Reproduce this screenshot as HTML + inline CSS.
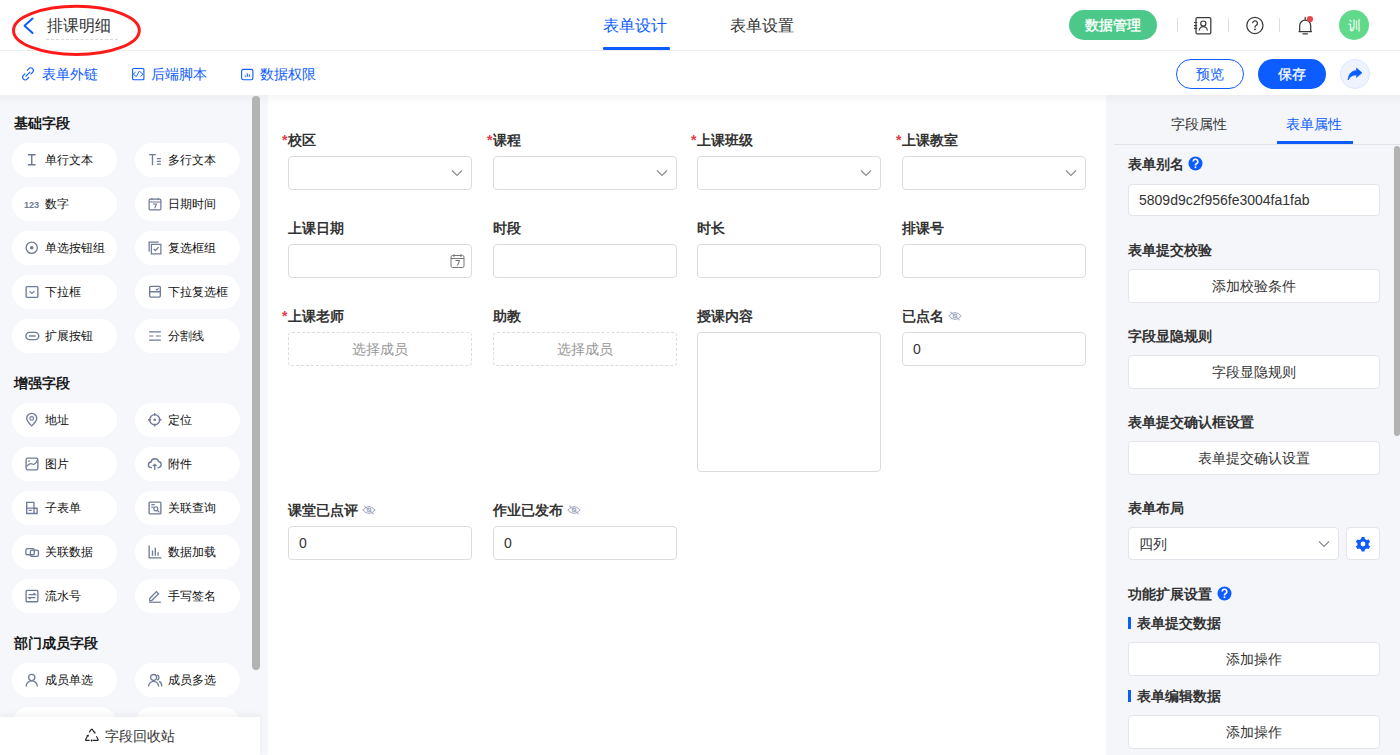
<!DOCTYPE html>
<html><head><meta charset="utf-8">
<style>
*{box-sizing:border-box;margin:0;padding:0}
html,body{width:1400px;height:755px;overflow:hidden;background:#fff;font-family:"Liberation Sans",sans-serif;color:#333}
.a{position:absolute}
.hdr{left:0;top:0;width:1400px;height:51px;background:#fff;border-bottom:1px solid #eceef2}
.tb{left:0;top:51px;width:1400px;height:44px;background:#fff}
.lp{left:0;top:95px;width:268px;height:660px;background:#f5f7fb}
.cv{left:268px;top:95px;width:838px;height:660px;background:#fff}
.rp{left:1106px;top:95px;width:294px;height:660px;background:#f5f6fa}
.sec{font-size:14px;font-weight:bold;color:#1a1a1a;left:14px;line-height:16px}
.pill{width:105px;height:34px;border-radius:17px;background:#fff;font-size:12px;color:#111;line-height:34px;padding-left:33px}
.pill svg{position:absolute;left:13px;top:10px;overflow:visible}
.lbl{font-size:14px;font-weight:bold;color:#333;line-height:16px}
.star{color:#e34d59;font-weight:normal;position:absolute;left:-6px;top:1px;font-size:13px}
.inp{width:184px;height:34px;border:1px solid #dcdcdc;border-radius:4px;background:#fff}
.dash{width:184px;height:34px;border:1px dashed #d9dce3;border-radius:4px;background:#fff;font-size:14px;color:#999;text-align:center;line-height:32px}
.val{font-size:14px;color:#333;line-height:32px;padding-left:10px}
.rl{font-size:14px;font-weight:bold;color:#333;left:1128px;line-height:16px}
.rb{left:1128px;width:252px;height:34px;border:1px solid #e3e5ea;border-radius:4px;background:#fff;font-size:14px;color:#333;text-align:center;line-height:32px}
</style></head><body>

<!-- header -->
<div class="a hdr"></div>
<svg class="a" style="left:0;top:0" width="160" height="60">
  <path d="M32.5 18.5 L24.5 25.7 L32.5 33" fill="none" stroke="#0d5cff" stroke-width="2" stroke-linecap="round" stroke-linejoin="round"/>
</svg>
<div class="a" style="left:47px;top:16px;font-size:16px;line-height:20px;color:#333">排课明细</div>
<div class="a" style="left:46px;top:39px;width:72px;border-top:1px dashed #d6d8de"></div>
<svg class="a" style="left:0;top:0" width="160" height="60">
  <ellipse cx="76.4" cy="30.4" rx="62.9" ry="24.1" fill="none" stroke="#ff1a1a" stroke-width="3"/>
</svg>

<div class="a" style="left:603px;top:16px;font-size:16px;line-height:20px;color:#0d5cff">表单设计</div>
<div class="a" style="left:603px;top:47px;width:67px;height:3px;background:#0d5cff;border-radius:1px"></div>
<div class="a" style="left:730px;top:16px;font-size:16px;line-height:20px;color:#333">表单设置</div>

<div class="a" style="left:1069px;top:10px;width:88px;height:30px;border-radius:15px;background:#4cc98a;color:#fff;font-size:14px;line-height:30px;text-align:center;font-weight:500;-webkit-text-stroke:0.35px #fff">数据管理</div>
<div class="a" style="left:1177px;top:18px;width:1px;height:14px;background:#dedede"></div>
<div class="a" style="left:1228px;top:18px;width:1px;height:14px;background:#dedede"></div>
<div class="a" style="left:1279px;top:18px;width:1px;height:14px;background:#dedede"></div>
<div class="a" style="left:1339px;top:10px;width:30px;height:30px;border-radius:15px;background:#60d98a;color:#fff;font-size:13px;line-height:32px;text-align:center">训</div>


<svg class="a" style="left:1190px;top:14px" width="24" height="24" viewBox="0 0 24 24"><rect x="6" y="3.5" width="14.8" height="16.3" rx="1.3" stroke="#3a3a3a" stroke-width="1.25" fill="none"/><path d="M4 8.5h3.2M4 11.6h3.2M4 14.4h3.2" stroke="#3a3a3a" stroke-width="1.2"/><circle cx="13.3" cy="9.6" r="2.6" stroke="#3a3a3a" stroke-width="1.2" fill="none"/><path d="M9.3 16.6a4 4 0 0 1 8 0" stroke="#3a3a3a" stroke-width="1.2" fill="none"/></svg>
<svg class="a" style="left:1243px;top:14px" width="24" height="24" viewBox="0 0 24 24"><circle cx="11.9" cy="11.4" r="8.1" stroke="#3a3a3a" stroke-width="1.25" fill="none"/><path d="M9.6 9.3a2.4 2.4 0 1 1 3.4 2.2c-.7.35-1 .7-1 1.5v.7" stroke="#3a3a3a" stroke-width="1.25" fill="none"/><circle cx="12" cy="15.4" r="0.9" fill="#3a3a3a"/></svg>
<svg class="a" style="left:1293px;top:14px" width="24" height="24" viewBox="0 0 24 24"><path d="M5.5 17.5h13.5M6.7 17.2v-5.5a5.5 5.5 0 0 1 11 0v5.5" stroke="#3a3a3a" stroke-width="1.25" fill="none" stroke-linejoin="round"/><path d="M12.2 3.4v2.3M10 19.8h4.4" stroke="#3a3a3a" stroke-width="1.25" stroke-linecap="round"/><circle cx="17" cy="5.1" r="3.1" fill="#e5484d"/></svg>
<svg class="a" style="left:20px;top:66px" width="16" height="16" viewBox="0 0 16 16"><path d="M7.3 4.3l1.6-1.6a2.6 2.6 0 0 1 3.7 3.7L11 8M5 7.8L3.4 9.4a2.6 2.6 0 0 0 3.7 3.7l1.6-1.6M5.9 10.1l4-4" stroke="#0d5cff" stroke-width="1.1" fill="none" stroke-linecap="round"/></svg>
<svg class="a" style="left:130px;top:66px" width="16" height="16" viewBox="0 0 16 16"><rect x="2.6" y="2.5" width="11.3" height="11.2" rx="1" stroke="#0d5cff" stroke-width="1.1" fill="none"/><path d="M5.6 6L3.2 8.1L6.3 10.6L9.3 5.1L13 8.2L10.4 10.5" stroke="#0d5cff" stroke-width="0.9" fill="none" stroke-linejoin="round"/></svg>
<svg class="a" style="left:239px;top:66px" width="16" height="16" viewBox="0 0 16 16"><rect x="2.6" y="3.4" width="11.3" height="10.3" rx="1.8" stroke="#0d5cff" stroke-width="1.1" fill="none"/><path d="M6.3 10.8V9.3M8.3 10.8V7.3M10.3 10.8V8.3" stroke="#0d5cff" stroke-width="1" fill="none"/></svg>


<!-- toolbar -->
<div class="a" style="left:42px;top:66px;font-size:14px;line-height:16px;color:#0d5cff">表单外链</div>
<div class="a" style="left:151px;top:66px;font-size:14px;line-height:16px;color:#0d5cff">后端脚本</div>
<div class="a" style="left:260px;top:66px;font-size:14px;line-height:16px;color:#0d5cff">数据权限</div>

<div class="a" style="left:1176px;top:59px;width:68px;height:30px;border:1px solid #0d5cff;border-radius:15px;color:#0d5cff;font-size:14px;line-height:28px;text-align:center">预览</div>
<div class="a" style="left:1258px;top:59px;width:68px;height:30px;border-radius:15px;background:#0d5cff;color:#fff;font-size:14px;line-height:30px;text-align:center;font-weight:500;-webkit-text-stroke:0.3px #fff">保存</div>
<div class="a" style="left:1340px;top:59px;width:30px;height:30px;border-radius:15px;background:#eef3ff;border:1px solid #dbe6ff"></div>

<svg class="a" style="left:1340px;top:59px" width="30" height="30" viewBox="0 0 30 30"><path d="M8 21C8.5 15 12 11.5 16.5 11.5V9L22 13.8L16.5 18.5V16C12.5 16 10 17.5 8 21z" fill="#0d5cff" stroke="#0d5cff" stroke-width="0.6" stroke-linejoin="round"/></svg>
<!-- panels -->
<div class="a lp"></div>
<div class="a cv"></div>
<div class="a rp"></div>
<div class="a" style="left:0;top:95px;width:1400px;height:10px;background:linear-gradient(rgba(0,0,0,0.035),rgba(0,0,0,0))"></div>
<div class="a sec" style="top:115px">基础字段</div>
<div class="a sec" style="top:375px">增强字段</div>
<div class="a sec" style="top:635px">部门成员字段</div>
<div class="a pill" style="left:12px;top:143px"><svg width="14" height="14" viewBox="0 0 12.5 12.5" style="left:13px;top:10px"><path d="M2.5 1.5h7M2.5 10.5h7M6 1.5v9" stroke="#6e7a96" stroke-width="1.3" fill="none"/></svg>单行文本</div>
<div class="a pill" style="left:135px;top:143px"><svg width="14" height="14" viewBox="0 0 12.5 12.5" style="left:13px;top:10px"><path d="M1 1.5h6M4 1.5v9.5M8 5h3.5M8 7.5h3.5M8 10h3.5" stroke="#6e7a96" stroke-width="1.2" fill="none"/></svg>多行文本</div>
<div class="a pill" style="left:12px;top:187px"><svg width="14" height="14" viewBox="0 0 12.5 12.5" style="left:13px;top:10px"><text x="-1" y="9.6" font-family="Liberation Sans" font-weight="bold" font-size="8.2" fill="#6e7a96">123</text></svg>数字</div>
<div class="a pill" style="left:135px;top:187px"><svg width="14" height="14" viewBox="0 0 12.5 12.5" style="left:13px;top:10px"><rect x="1" y="2" width="10.5" height="9.5" rx="1" stroke="#6e7a96" stroke-width="1.1" fill="none"/><path d="M1 4.5h10.5M3.5 0.8v2.2M9 0.8v2.2M4.5 6.2h3l-1.5 4" stroke="#6e7a96" stroke-width="1" fill="none"/></svg>日期时间</div>
<div class="a pill" style="left:12px;top:231px"><svg width="14" height="14" viewBox="0 0 12.5 12.5" style="left:13px;top:10px"><circle cx="6" cy="6" r="5" stroke="#6e7a96" stroke-width="1.2" fill="none"/><circle cx="6" cy="6" r="1.6" fill="#6e7a96"/></svg>单选按钮组</div>
<div class="a pill" style="left:135px;top:231px"><svg width="14" height="14" viewBox="0 0 12.5 12.5" style="left:13px;top:10px"><path d="M1 9.5V1h8.5" stroke="#6e7a96" stroke-width="1.1" fill="none"/><rect x="3" y="3" width="8.5" height="8.5" stroke="#6e7a96" stroke-width="1.1" fill="none"/><path d="M5 7l1.5 1.5 3-3" stroke="#6e7a96" stroke-width="1.1" fill="none"/></svg>复选框组</div>
<div class="a pill" style="left:12px;top:275px"><svg width="14" height="14" viewBox="0 0 12.5 12.5" style="left:13px;top:10px"><rect x="1" y="1.5" width="10.5" height="9.5" rx="0.8" stroke="#6e7a96" stroke-width="1.2" fill="none"/><path d="M4 5.5l2.2 2 2.2-2" stroke="#6e7a96" stroke-width="1.1" fill="none"/></svg>下拉框</div>
<div class="a pill" style="left:135px;top:275px"><svg width="14" height="14" viewBox="0 0 12.5 12.5" style="left:13px;top:10px"><path d="M1.5 6V2.2Q1.5 1.2 2.5 1.2h7.5q1 0 1 1V6ZM1.5 6v3.8q0 1 1 1h7.5q1 0 1-1V6" stroke="#6e7a96" stroke-width="1.2" fill="none"/><path d="M7 3.5l1 1 1.5-1.5" stroke="#6e7a96" stroke-width="1" fill="none"/></svg>下拉复选框</div>
<div class="a pill" style="left:12px;top:319px"><svg width="14" height="14" viewBox="0 0 12.5 12.5" style="left:13px;top:10px"><rect x="0.8" y="3" width="11.5" height="6.5" rx="3.25" stroke="#6e7a96" stroke-width="1.3" fill="none"/><path d="M3.5 6.25h6" stroke="#6e7a96" stroke-width="1.3"/></svg>扩展按钮</div>
<div class="a pill" style="left:135px;top:319px"><svg width="14" height="14" viewBox="0 0 12.5 12.5" style="left:13px;top:10px"><path d="M1 2.5h10.5M1 10h10.5" stroke="#6e7a96" stroke-width="1.1"/><path d="M1 6.25h4M7 6.25h4.5" stroke="#6e7a96" stroke-width="1.1"/></svg>分割线</div>
<div class="a pill" style="left:12px;top:403px"><svg width="14" height="14" viewBox="0 0 12.5 12.5" style="left:13px;top:10px"><path d="M6 11.5C3 8.5 1.5 6.5 1.5 4.8a4.5 4.5 0 0 1 9 0c0 1.7-1.5 3.7-4.5 6.7z" stroke="#6e7a96" stroke-width="1.2" fill="none"/><circle cx="6" cy="4.8" r="1.6" stroke="#6e7a96" stroke-width="1.1" fill="none"/></svg>地址</div>
<div class="a pill" style="left:135px;top:403px"><svg width="14" height="14" viewBox="0 0 12.5 12.5" style="left:13px;top:10px"><circle cx="6" cy="6" r="4.5" stroke="#6e7a96" stroke-width="1.2" fill="none"/><circle cx="6" cy="6" r="1.2" fill="#6e7a96"/><path d="M6 0v2.5M6 9.5V12M0 6h2.5M9.5 6H12" stroke="#6e7a96" stroke-width="1.2"/></svg>定位</div>
<div class="a pill" style="left:12px;top:447px"><svg width="14" height="14" viewBox="0 0 12.5 12.5" style="left:13px;top:10px"><rect x="1" y="1" width="10.5" height="10.5" rx="1.5" stroke="#6e7a96" stroke-width="1.2" fill="none"/><path d="M1.5 8.5Q4 4.8 6.5 6.2T11 3" stroke="#6e7a96" stroke-width="1.1" fill="none"/><circle cx="3.6" cy="3.6" r="0.8" fill="#6e7a96"/></svg>图片</div>
<div class="a pill" style="left:135px;top:447px"><svg width="14" height="14" viewBox="0 0 12.5 12.5" style="left:13px;top:10px"><path d="M3.5 9.5H3a2.5 2.5 0 0 1-.3-5A3.5 3.5 0 0 1 9.5 4a2.8 2.8 0 0 1 0 5.5H8.5" stroke="#6e7a96" stroke-width="1.2" fill="none"/><path d="M6 11.5V6.5M4.3 8.2L6 6.5l1.7 1.7" stroke="#6e7a96" stroke-width="1.1" fill="none"/></svg>附件</div>
<div class="a pill" style="left:12px;top:491px"><svg width="14" height="14" viewBox="0 0 12.5 12.5" style="left:13px;top:10px"><path d="M1.5 11.2V1.2h6.5V11.2zM1.5 6.3h6.5M3.3 8.4h2.8M8 6.5h2.8v4.7H8" stroke="#6e7a96" stroke-width="1.2" fill="none"/></svg>子表单</div>
<div class="a pill" style="left:135px;top:491px"><svg width="14" height="14" viewBox="0 0 12.5 12.5" style="left:13px;top:10px"><rect x="1" y="1" width="10.5" height="10.5" rx="0.8" stroke="#6e7a96" stroke-width="1.2" fill="none"/><path d="M3 3.2h3M3 5.5h2" stroke="#6e7a96" stroke-width="1"/><circle cx="7" cy="7" r="1.8" stroke="#6e7a96" stroke-width="1" fill="none"/><path d="M8.3 8.3l1.8 1.8" stroke="#6e7a96" stroke-width="1.1"/></svg>关联查询</div>
<div class="a pill" style="left:12px;top:535px"><svg width="14" height="14" viewBox="0 0 12.5 12.5" style="left:13px;top:10px"><rect x="0.8" y="3.2" width="7.5" height="5.5" rx="1.4" stroke="#6e7a96" stroke-width="1.2" fill="none"/><rect x="4.8" y="4.6" width="7.2" height="5.5" rx="1.4" stroke="#6e7a96" stroke-width="1.2" fill="none"/></svg>关联数据</div>
<div class="a pill" style="left:135px;top:535px"><svg width="14" height="14" viewBox="0 0 12.5 12.5" style="left:13px;top:10px"><path d="M1 0.5v11h11M4 9.5V5M6.5 9.5V2.5M9 9.5V6.5" stroke="#6e7a96" stroke-width="1.2" fill="none"/></svg>数据加载</div>
<div class="a pill" style="left:12px;top:579px"><svg width="14" height="14" viewBox="0 0 12.5 12.5" style="left:13px;top:10px"><rect x="1" y="1.2" width="10.5" height="10.2" rx="1" stroke="#6e7a96" stroke-width="1.2" fill="none"/><path d="M3.2 5h6l-1.6-1.4M9.3 7.6h-6l1.6 1.4" stroke="#6e7a96" stroke-width="1.1" fill="none"/></svg>流水号</div>
<div class="a pill" style="left:135px;top:579px"><svg width="14" height="14" viewBox="0 0 12.5 12.5" style="left:13px;top:10px"><path d="M1.5 8.5l6-6.2 2 2-6.2 6H1.5z" stroke="#6e7a96" stroke-width="1.1" fill="none"/><path d="M1 11.8h10.5" stroke="#6e7a96" stroke-width="1.1"/></svg>手写签名</div>
<div class="a pill" style="left:12px;top:663px"><svg width="14" height="14" viewBox="0 0 12.5 12.5" style="left:13px;top:10px"><circle cx="6" cy="4" r="2.8" stroke="#6e7a96" stroke-width="1.2" fill="none"/><path d="M1 12a5 5 0 0 1 10 0" stroke="#6e7a96" stroke-width="1.2" fill="none"/></svg>成员单选</div>
<div class="a pill" style="left:135px;top:663px"><svg width="14" height="14" viewBox="0 0 12.5 12.5" style="left:13px;top:10px"><circle cx="5" cy="4" r="2.7" stroke="#6e7a96" stroke-width="1.2" fill="none"/><path d="M0.5 12a4.5 4.5 0 0 1 9 0M8.2 1.6a2.6 2.6 0 0 1 0 4.8M10 7.5a4.5 4.5 0 0 1 2.2 4.5" stroke="#6e7a96" stroke-width="1.2" fill="none"/></svg>成员多选</div>
<div class="a pill" style="left:12px;top:707px"></div>
<div class="a pill" style="left:135px;top:707px"></div>

<div class="a" style="left:252px;top:96px;width:8px;height:574px;border-radius:4px;background:#b3b3b3"></div>
<div class="a" style="left:0;top:717px;width:260px;height:38px;background:#fff;box-shadow:0 -2px 6px rgba(0,0,0,0.06)"></div>
<svg class="a" style="left:78px;top:722px" width="30" height="28" viewBox="0 0 30 28"><path d="M11.2 10.4L13.3 7.4Q13.8 6.8 14.3 7.4L16.3 10.4M9.8 13.6L7.6 17.6Q7.2 18.4 8.1 18.4H11.6M14.5 18.4H19.6Q20.5 18.4 20.1 17.6L18.4 14.3" stroke="#222" stroke-width="1.1" fill="none"/><path d="M15.6 11.6L17.8 11.2L16.9 9.1z M8.2 13.6L10.6 12.4L10.9 14.8z M14.1 16.9L12.4 18.4L14.1 19.9z" fill="#222"/></svg>
<div class="a" style="left:105px;top:728px;font-size:14px;line-height:16px;color:#333">字段回收站</div>
<div class="a" style="left:282px;top:133px;font-size:14px;line-height:14px;font-weight:bold;color:#e6394a">*</div><div class="a lbl" style="left:288px;top:132px">校区</div>
<div class="a inp" style="left:288px;top:156px"></div>
<svg class="a" style="left:451px;top:169px" width="12" height="8" viewBox="0 0 12 8"><path d="M1 1.5l5 5 5-5" stroke="#8c8c8c" stroke-width="1.2" fill="none"/></svg>
<div class="a" style="left:487px;top:133px;font-size:14px;line-height:14px;font-weight:bold;color:#e6394a">*</div><div class="a lbl" style="left:493px;top:132px">课程</div>
<div class="a inp" style="left:493px;top:156px"></div>
<svg class="a" style="left:656px;top:169px" width="12" height="8" viewBox="0 0 12 8"><path d="M1 1.5l5 5 5-5" stroke="#8c8c8c" stroke-width="1.2" fill="none"/></svg>
<div class="a" style="left:691px;top:133px;font-size:14px;line-height:14px;font-weight:bold;color:#e6394a">*</div><div class="a lbl" style="left:697px;top:132px">上课班级</div>
<div class="a inp" style="left:697px;top:156px"></div>
<svg class="a" style="left:860px;top:169px" width="12" height="8" viewBox="0 0 12 8"><path d="M1 1.5l5 5 5-5" stroke="#8c8c8c" stroke-width="1.2" fill="none"/></svg>
<div class="a" style="left:896px;top:133px;font-size:14px;line-height:14px;font-weight:bold;color:#e6394a">*</div><div class="a lbl" style="left:902px;top:132px">上课教室</div>
<div class="a inp" style="left:902px;top:156px"></div>
<svg class="a" style="left:1065px;top:169px" width="12" height="8" viewBox="0 0 12 8"><path d="M1 1.5l5 5 5-5" stroke="#8c8c8c" stroke-width="1.2" fill="none"/></svg>
<div class="a lbl" style="left:288px;top:220px">上课日期</div>
<div class="a inp" style="left:288px;top:244px"></div>
<div class="a lbl" style="left:493px;top:220px">时段</div>
<div class="a inp" style="left:493px;top:244px"></div>
<div class="a lbl" style="left:697px;top:220px">时长</div>
<div class="a inp" style="left:697px;top:244px"></div>
<div class="a lbl" style="left:902px;top:220px">排课号</div>
<div class="a inp" style="left:902px;top:244px"></div>
<svg class="a" style="left:450px;top:253px" width="15" height="16" viewBox="0 0 15 16"><rect x="1" y="2.5" width="13" height="12" rx="1.5" stroke="#777" stroke-width="1" fill="none"/><path d="M1 5.5h13M4 1v3M11 1v3" stroke="#777" stroke-width="1" fill="none"/><path d="M5.5 7.5h4l-2 5" stroke="#666" stroke-width="1" fill="none"/></svg>
<div class="a" style="left:282px;top:309px;font-size:14px;line-height:14px;font-weight:bold;color:#e6394a">*</div><div class="a lbl" style="left:288px;top:308px">上课老师</div>
<div class="a dash" style="left:288px;top:332px">选择成员</div>
<div class="a lbl" style="left:493px;top:308px">助教</div>
<div class="a dash" style="left:493px;top:332px">选择成员</div>
<div class="a lbl" style="left:697px;top:308px">授课内容</div>
<div class="a inp" style="left:697px;top:332px;height:140px"></div>
<div class="a lbl" style="left:902px;top:308px">已点名</div><svg class="a" style="left:948px;top:310px" width="14" height="12" viewBox="0 0 15 12"><path d="M1 6q6.5-7.5 13 0q-6.5 7.5-13 0z" stroke="#a3adc2" stroke-width="1.1" fill="none"/><circle cx="7.5" cy="6" r="2" stroke="#a3adc2" stroke-width="1.1" fill="none"/><path d="M2.5 1.5l10 9" stroke="#a3adc2" stroke-width="1.1"/></svg>
<div class="a inp val" style="left:902px;top:332px">0</div>
<div class="a lbl" style="left:288px;top:502px">课堂已点评</div><svg class="a" style="left:362px;top:504px" width="14" height="12" viewBox="0 0 15 12"><path d="M1 6q6.5-7.5 13 0q-6.5 7.5-13 0z" stroke="#a3adc2" stroke-width="1.1" fill="none"/><circle cx="7.5" cy="6" r="2" stroke="#a3adc2" stroke-width="1.1" fill="none"/><path d="M2.5 1.5l10 9" stroke="#a3adc2" stroke-width="1.1"/></svg>
<div class="a inp val" style="left:288px;top:526px">0</div>
<div class="a lbl" style="left:493px;top:502px">作业已发布</div><svg class="a" style="left:567px;top:504px" width="14" height="12" viewBox="0 0 15 12"><path d="M1 6q6.5-7.5 13 0q-6.5 7.5-13 0z" stroke="#a3adc2" stroke-width="1.1" fill="none"/><circle cx="7.5" cy="6" r="2" stroke="#a3adc2" stroke-width="1.1" fill="none"/><path d="M2.5 1.5l10 9" stroke="#a3adc2" stroke-width="1.1"/></svg>
<div class="a inp val" style="left:493px;top:526px">0</div>

<div class="a" style="left:1171px;top:116px;font-size:14px;line-height:16px;color:#333">字段属性</div>
<div class="a" style="left:1286px;top:116px;font-size:14px;line-height:16px;color:#0d5cff">表单属性</div>
<div class="a" style="left:1114px;top:144px;width:286px;height:1px;background:#dfe2e8"></div>
<div class="a" style="left:1277px;top:141px;width:76px;height:3px;background:#0d5cff"></div>
<div class="a" style="left:1394px;top:146px;width:6px;height:290px;border-radius:3px;background:#b3b3b3"></div>
<div class="a rl" style="top:156px">表单别名</div>
<svg class="a" style="left:1188px;top:156px" width="15" height="15" viewBox="0 0 15 15"><circle cx="7.5" cy="7.5" r="7" fill="#0d5cff"/><path d="M5.2 5.6a2.3 2.3 0 1 1 3.2 2.1c-.6.3-.9.6-.9 1.3v.4" stroke="#fff" stroke-width="1.6" fill="none"/><circle cx="7.5" cy="11.3" r="0.95" fill="#fff"/></svg>
<div class="a rb" style="top:184px;height:32px;text-align:left;padding-left:10px;line-height:30px">5809d9c2f956fe3004fa1fab</div>
<div class="a rl" style="top:242px">表单提交校验</div>
<div class="a rb" style="top:269px">添加校验条件</div>
<div class="a rl" style="top:328px">字段显隐规则</div>
<div class="a rb" style="top:355px">字段显隐规则</div>
<div class="a rl" style="top:414px">表单提交确认框设置</div>
<div class="a rb" style="top:441px">表单提交确认设置</div>
<div class="a rl" style="top:500px">表单布局</div>
<div class="a rb" style="top:527px;width:211px;height:33px;text-align:left;padding-left:10px">四列</div>
<svg class="a" style="left:1318px;top:540px" width="12" height="8" viewBox="0 0 12 8"><path d="M1 1.5l5 5 5-5" stroke="#8c8c8c" stroke-width="1.2" fill="none"/></svg>
<div class="a rb" style="top:527px;left:1346px;width:34px;height:33px"></div>
<svg class="a" style="left:1355px;top:536px" width="16" height="16" viewBox="0 0 16 16"><path fill="#0d5cff" fill-rule="evenodd" d="M6.6 1h2.8l.5 2 1.8 1 2-.6 1.4 2.4-1.5 1.4v2l1.5 1.4-1.4 2.4-2-.6-1.8 1-.5 2H6.6l-.5-2-1.8-1-2 .6L.9 10.6l1.5-1.4v-2L.9 5.8l1.4-2.4 2 .6 1.8-1zM8 5.6a2.4 2.4 0 1 0 0 4.8a2.4 2.4 0 1 0 0-4.8z"/></svg>
<div class="a rl" style="top:586px">功能扩展设置</div>
<svg class="a" style="left:1217px;top:586px" width="15" height="15" viewBox="0 0 15 15"><circle cx="7.5" cy="7.5" r="7" fill="#0d5cff"/><path d="M5.2 5.6a2.3 2.3 0 1 1 3.2 2.1c-.6.3-.9.6-.9 1.3v.4" stroke="#fff" stroke-width="1.6" fill="none"/><circle cx="7.5" cy="11.3" r="0.95" fill="#fff"/></svg>
<div class="a" style="left:1128px;top:617px;width:3px;height:12px;background:#0d5cff"></div>
<div class="a rl" style="left:1137px;top:615px">表单提交数据</div>
<div class="a rb" style="top:642px">添加操作</div>
<div class="a" style="left:1128px;top:690px;width:3px;height:12px;background:#0d5cff"></div>
<div class="a rl" style="left:1137px;top:688px">表单编辑数据</div>
<div class="a rb" style="top:715px">添加操作</div>


</body></html>
